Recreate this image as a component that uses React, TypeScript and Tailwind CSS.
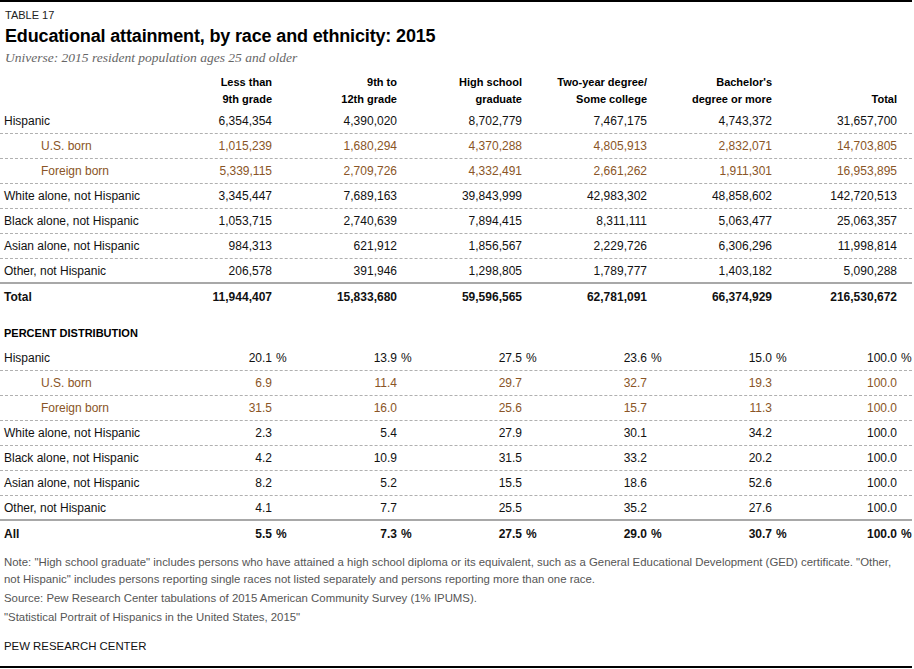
import React from "react";

type Row = {
  label: string;
  values: string[];
  sub?: boolean;
  pct?: boolean;
  bold?: boolean;
  last?: boolean;
};

const counts: Row[] = [
  { label: "Hispanic", values: ["6,354,354", "4,390,020", "8,702,779", "7,467,175", "4,743,372", "31,657,700"] },
  { label: "U.S. born", sub: true, values: ["1,015,239", "1,680,294", "4,370,288", "4,805,913", "2,832,071", "14,703,805"] },
  { label: "Foreign born", sub: true, values: ["5,339,115", "2,709,726", "4,332,491", "2,661,262", "1,911,301", "16,953,895"] },
  { label: "White alone, not Hispanic", values: ["3,345,447", "7,689,163", "39,843,999", "42,983,302", "48,858,602", "142,720,513"] },
  { label: "Black alone, not Hispanic", values: ["1,053,715", "2,740,639", "7,894,415", "8,311,111", "5,063,477", "25,063,357"] },
  { label: "Asian alone, not Hispanic", values: ["984,313", "621,912", "1,856,567", "2,229,726", "6,306,296", "11,998,814"] },
  { label: "Other, not Hispanic", last: true, values: ["206,578", "391,946", "1,298,805", "1,789,777", "1,403,182", "5,090,288"] },
  { label: "Total", bold: true, values: ["11,944,407", "15,833,680", "59,596,565", "62,781,091", "66,374,929", "216,530,672"] },
];

const percents: Row[] = [
  { label: "Hispanic", pct: true, values: ["20.1", "13.9", "27.5", "23.6", "15.0", "100.0"] },
  { label: "U.S. born", sub: true, values: ["6.9", "11.4", "29.7", "32.7", "19.3", "100.0"] },
  { label: "Foreign born", sub: true, values: ["31.5", "16.0", "25.6", "15.7", "11.3", "100.0"] },
  { label: "White alone, not Hispanic", values: ["2.3", "5.4", "27.9", "30.1", "34.2", "100.0"] },
  { label: "Black alone, not Hispanic", values: ["4.2", "10.9", "31.5", "33.2", "20.2", "100.0"] },
  { label: "Asian alone, not Hispanic", values: ["8.2", "5.2", "15.5", "18.6", "52.6", "100.0"] },
  { label: "Other, not Hispanic", last: true, values: ["4.1", "7.7", "25.5", "35.2", "27.6", "100.0"] },
  { label: "All", bold: true, pct: true, values: ["5.5", "7.3", "27.5", "29.0", "30.7", "100.0"] },
];

const headers: [string, string][] = [
  ["Less than", "9th grade"],
  ["9th to", "12th grade"],
  ["High school", "graduate"],
  ["Two-year degree/", "Some college"],
  ["Bachelor's", "degree or more"],
  ["", "Total"],
];

function DataRow({ row }: { row: Row }) {
  const border = row.bold
    ? ""
    : row.last
      ? "border-b-2 border-[#a8a8a8]"
      : "border-b border-dashed border-[#b0b0b0]";
  const color = row.sub ? "text-[#8a5526]" : "text-[#111]";
  return (
    <div className={`flex h-[25px] items-center ${border} ${color} ${row.bold ? "font-bold" : ""}`}>
      <div className={`w-[161px] shrink-0 ${row.sub ? "pl-[41px]" : "pl-[4px]"}`}>{row.label}</div>
      {row.values.map((v, i) => (
        <div key={i} className="flex w-[125px] shrink-0 justify-end">
          <span>{v}</span>
          <span className="w-[14px] pl-[4px] text-left">{row.pct ? "%" : ""}</span>
        </div>
      ))}
    </div>
  );
}

export default function App() {
  return (
    <div className="h-[669px] w-[914px] bg-white font-['Liberation_Sans',Arial,sans-serif] text-[12px] text-[#111]">
      <div className="w-[912px] border-t-2 border-black">
        <div className="pl-[5px] pt-[7px] text-[11px] leading-[12px] text-[#222]">TABLE 17</div>
        <div className="pl-[5px] pt-[4px] text-[18px] font-bold leading-[22px] tracking-[-0.15px] text-black">
          Educational attainment, by race and ethnicity: 2015
        </div>
        <div className="pl-[5px] pt-[2px] font-['Liberation_Serif',Georgia,serif] text-[13.5px] italic leading-[18px] text-[#666]">
          Universe: 2015 resident population ages 25 and older
        </div>

        <div className="flex pt-[7px] text-[11px] font-bold leading-[17px] text-black">
          <div className="w-[161px] shrink-0" />
          {headers.map(([a, b], i) => (
            <div key={i} className="w-[125px] shrink-0 pr-[14px] text-right">
              <div className="h-[17px]">{a}</div>
              <div>{b}</div>
            </div>
          ))}
        </div>

        <div className="pt-[1px]">
          {counts.map((r) => (
            <DataRow key={r.label} row={r} />
          ))}
        </div>

        <div className="mt-[12px] flex h-[25px] items-center pl-[4px] text-[11px] font-bold text-black">
          PERCENT DISTRIBUTION
        </div>
        <div>
          {percents.map((r) => (
            <DataRow key={r.label} row={r} />
          ))}
        </div>

        <div className="pl-[4px] pt-[8px] text-[11.4px] leading-[17px] text-[#555]">
          <p className="whitespace-nowrap">
            Note: "High school graduate" includes persons who have attained a high school diploma or its equivalent, such as a General Educational Development (GED) certificate. "Other,
            <br />
            not Hispanic" includes persons reporting single races not listed separately and persons reporting more than one race.
          </p>
          <p className="mt-[2px]">Source: Pew Research Center tabulations of 2015 American Community Survey (1% IPUMS).</p>
          <p className="mt-[2px]">"Statistical Portrait of Hispanics in the United States, 2015"</p>
          <p className="mt-[12px] text-[#111]">PEW RESEARCH CENTER</p>
        </div>
        <div className="mt-[11px] border-b-2 border-black" />
      </div>
    </div>
  );
}
